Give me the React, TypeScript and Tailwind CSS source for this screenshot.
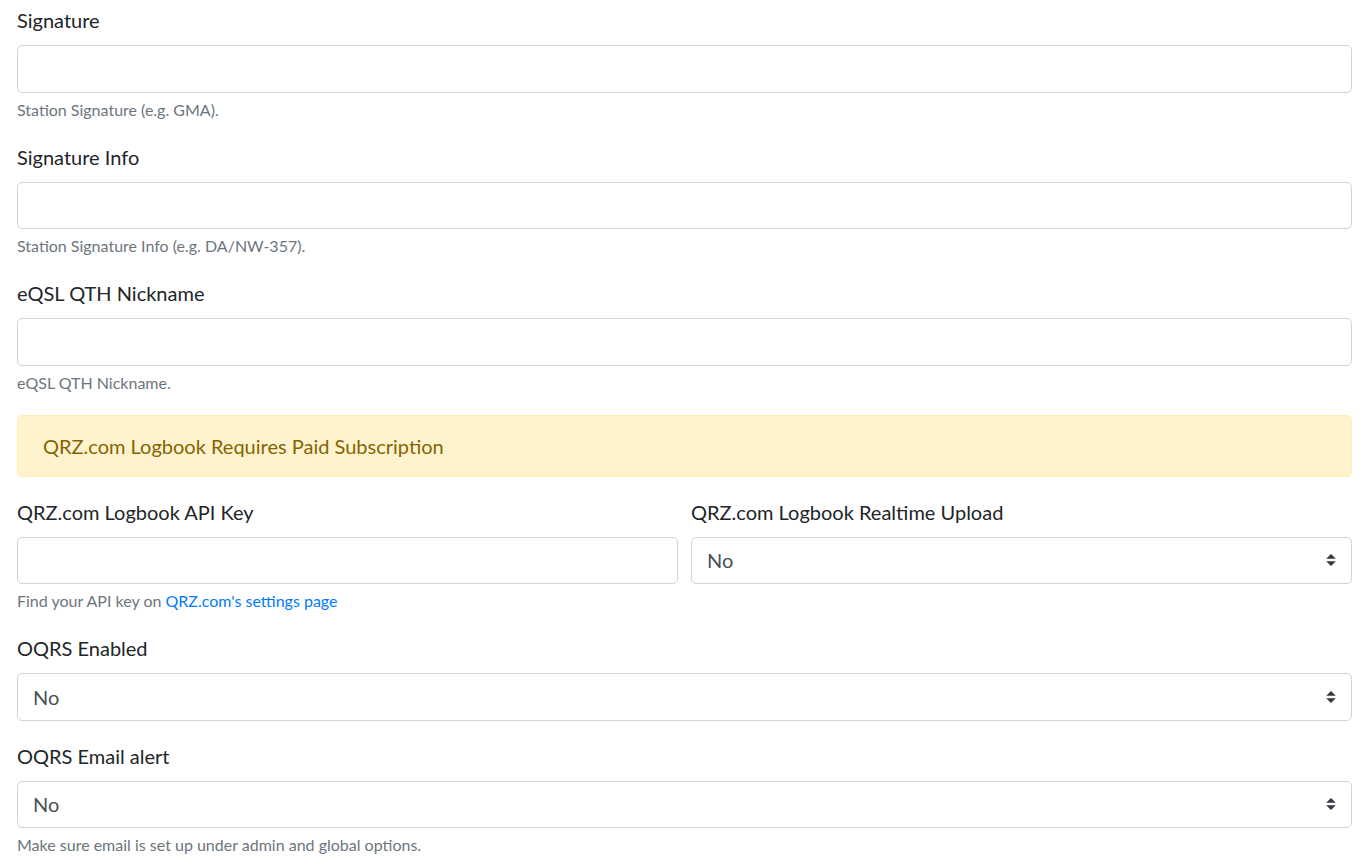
import React from "react";

const font = { fontFamily: '"Lato", "Segoe UI", sans-serif' };

const SelectArrow = () => (
  <svg
    className="pointer-events-none absolute right-[16px] top-1/2 -translate-y-1/2"
    width="10"
    height="12"
    viewBox="0 0 4 5"
  >
    <path fill="#343a40" d="M2 0L0 2h4zm0 5L0 3h4z" />
  </svg>
);

function TextField({ label, help }: { label: string; help?: React.ReactNode }) {
  return (
    <div className="mb-[20px]">
      <label className="mb-[10px] block text-[20px] leading-[30px] text-[#212529]">{label}</label>
      <input
        type="text"
        className="block h-[47.5px] w-full rounded-[5px] border border-[#ced4da] bg-white px-[15px] text-[20px] text-[#495057] outline-none"
      />
      {help && <small className="mt-[5px] block text-[16px] leading-[24px] text-[#6c757d]">{help}</small>}
    </div>
  );
}

function SelectField({ label, help }: { label: string; help?: React.ReactNode }) {
  return (
    <div className="mb-[20px]">
      <label className="mb-[10px] block text-[20px] leading-[30px] text-[#212529]">{label}</label>
      <div className="relative">
        <select
          defaultValue="0"
          className="block h-[47.5px] w-full appearance-none rounded-[5px] border border-[#ced4da] bg-white pl-[15px] pr-[40px] text-[20px] text-[#495057] outline-none"
          style={font}
        >
          <option value="0">No</option>
          <option value="1">Yes</option>
        </select>
        <SelectArrow />
      </div>
      {help && <small className="mt-[5px] block text-[16px] leading-[24px] text-[#6c757d]">{help}</small>}
    </div>
  );
}

export default function App() {
  return (
    <div className="min-h-screen bg-white pl-[17px] pr-[14px] pt-[5px]" style={font}>
      <TextField label="Signature" help="Station Signature (e.g. GMA)." />
      <TextField label="Signature Info" help="Station Signature Info (e.g. DA/NW-357)." />
      <TextField label="eQSL QTH Nickname" help="eQSL QTH Nickname." />

      <div className="mb-[20px] rounded-[5px] border border-[#ffeeba] bg-[#fff3cd] px-[25px] py-[15px] text-[20px] leading-[30px] text-[#856404]">
        QRZ.com Logbook Requires Paid Subscription
      </div>

      <div className="grid grid-cols-2 gap-x-[13px]">
        <TextField
          label="QRZ.com Logbook API Key"
          help={
            <>
              Find your API key on{" "}
              <a href="#" className="text-[#007bff]">
                QRZ.com's settings page
              </a>
            </>
          }
        />
        <SelectField label="QRZ.com Logbook Realtime Upload" />
      </div>

      <SelectField label="OQRS Enabled" />
      <SelectField label="OQRS Email alert" help="Make sure email is set up under admin and global options." />
    </div>
  );
}
